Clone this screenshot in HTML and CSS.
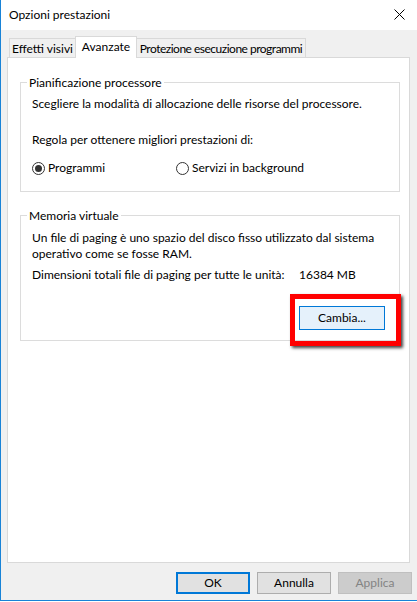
FILE: index.html
```html
<!DOCTYPE html>
<html lang="it">
<head>
<meta charset="utf-8">
<title>Opzioni prestazioni</title>
<link rel="stylesheet" href="styles.css">
</head>
<body>
<div class="window">
  <div class="titlebar">
    <span class="title">Opzioni prestazioni</span>
    <svg class="close" width="11" height="11" viewBox="0 0 11 11"><path d="M0.5 0.5 L10.5 10.5 M10.5 0.5 L0.5 10.5" stroke="#000" stroke-width="1" fill="none"/></svg>
  </div>
  <div class="tabs">
    <div class="tab tab-first">Effetti visivi</div>
    <div class="tab tab-active">Avanzate</div>
    <div class="tab tab-last">Protezione esecuzione programmi</div>
  </div>
  <div class="panel">
    <fieldset class="group">
      <legend>Pianificazione processore</legend>
      <div class="gbody gbody-1">
        <p class="line">Scegliere la modalità di allocazione delle risorse del processore.</p>
        <p class="line line-gap">Regola per ottenere migliori prestazioni di:</p>
        <div class="radios">
          <label class="radio radio-first"><span class="dot dot-checked"></span>Programmi</label>
          <label class="radio"><span class="dot"></span>Servizi in background</label>
        </div>
      </div>
    </fieldset>
    <fieldset class="group group-2">
      <legend>Memoria virtuale</legend>
      <div class="gbody gbody-2">
        <p class="line">Un file di paging è uno spazio del disco fisso utilizzato dal sistema<br>operativo come se fosse RAM.</p>
        <div class="total"><span class="total-label">Dimensioni totali file di paging per tutte le unità:</span><span>16384 MB</span></div>
        <div class="btnrow">
          <div class="hl-wrap">
            <button class="btn btn-cambia">Cambia...</button>
            <span class="highlight"></span>
          </div>
        </div>
      </div>
    </fieldset>
  </div>
  <div class="footer">
    <button class="btn btn-ok">OK</button>
    <button class="btn">Annulla</button>
    <button class="btn btn-disabled">Applica</button>
  </div>
</div>
</body>
</html>
```
FILE: styles.css
```css
html, body {
  margin: 0;
  background: #fff;
}
body {
  font-family: Lato, "Liberation Sans", Arial, sans-serif;
  font-size: 12px;
  line-height: 16px;
  color: #000;
}
.window {
  height: 600px;
  border-left: 1px solid #1883d7;
  border-bottom: 1px solid #1883d7;
  background: #f0f0f0;
  display: flex;
  flex-direction: column;
}
.titlebar {
  height: 30px;
  flex: none;
  background: #fff;
  display: flex;
  justify-content: space-between;
  align-items: flex-start;
  padding-left: 8px;
  box-sizing: border-box;
}
.title {
  padding-top: 7px;
}
.close {
  margin-top: 9px;
  margin-right: 12px;
}
.tabs {
  display: flex;
  align-items: flex-end;
  margin-top: 6px;
  padding-left: 8px;
  position: relative;
  z-index: 1;
}
.tab {
  box-sizing: border-box;
  height: 19px;
  padding-top: 2px;
  border-top: 1px solid #d9d9d9;
  background: #f0f0f0;
  text-align: center;
  white-space: nowrap;
  overflow: hidden;
}
.tab-first {
  width: 66px;
  border-left: 1px solid #d9d9d9;
}
.tab-active {
  width: 62px;
  height: 22px;
  margin-bottom: -1px;
  background: #fff;
  border: 1px solid #d9d9d9;
  border-bottom: none;
}
.tab-last {
  width: 169px;
  border-right: 1px solid #d9d9d9;
  letter-spacing: -0.5px;
}
.panel {
  margin-left: 6px;
  width: 403px;
  height: 506px;
  flex: none;
  box-sizing: border-box;
  border: 1px solid #d9d9d9;
  background: #fff;
  padding: 17px 0 0 12px;
}
.group {
  margin: 0;
  padding: 0;
  width: 380px;
  box-sizing: border-box;
  min-width: 0;
  border: 1px solid #dcdcdc;
}
.group legend {
  margin-left: 6px;
  padding: 0 2px;
  line-height: 15px;
}
.group-2 {
  margin-top: 16px;
}
.gbody {
  padding-left: 11px;
}
.gbody-1 {
  padding-top: 6px;
  padding-bottom: 15px;
}
.gbody-2 {
  padding-top: 7px;
  padding-bottom: 10px;
}
.line {
  margin: 0;
}
.line-gap {
  margin-top: 20px;
}
.radios {
  display: flex;
  margin-top: 12px;
}
.radio {
  display: flex;
  align-items: center;
  gap: 3px;
}
.radio-first {
  width: 144px;
}
.dot {
  width: 13px;
  height: 13px;
  box-sizing: border-box;
  border: 1px solid #333;
  border-radius: 50%;
  background: #fff;
  display: flex;
  align-items: center;
  justify-content: center;
}
.dot-checked::after {
  content: "";
  width: 7px;
  height: 7px;
  border-radius: 50%;
  background: #333;
}
.total {
  display: flex;
  margin-top: 5px;
}
.total-label {
  width: 267px;
}
.btnrow {
  display: flex;
  justify-content: flex-end;
  margin-top: 23px;
  padding-right: 14px;
}
.hl-wrap {
  position: relative;
  display: flex;
}
.btn {
  box-sizing: border-box;
  font: inherit;
  color: #000;
  width: 74px;
  height: 22px;
  padding: 0;
  background: #e1e1e1;
  border: 1px solid #adadad;
  border-radius: 0;
}
.btn-cambia {
  width: 86px;
  height: 24px;
  background: #e5f1fb;
  border-color: #0078d7;
}
.btn-ok {
  border: 2px solid #0078d7;
}
.btn-disabled {
  background: #cccccc;
  border-color: #bfbfbf;
  color: #838383;
}
.highlight {
  position: absolute;
  left: -9px;
  top: -12px;
  right: -16px;
  bottom: -16px;
  border: 5px solid #f00;
  box-shadow: 2px 2px 3px rgba(0, 0, 0, 0.75);
  pointer-events: none;
}
.footer {
  display: flex;
  justify-content: flex-end;
  gap: 7px;
  margin-top: 9px;
  padding-right: 5px;
}
```
